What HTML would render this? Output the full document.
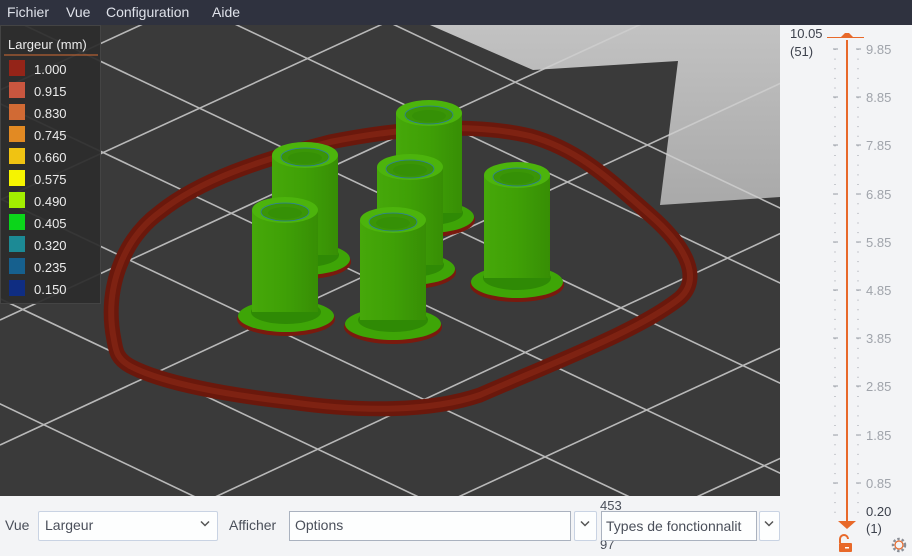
<!DOCTYPE html>
<html><head><meta charset="utf-8"><style>
*{margin:0;padding:0;box-sizing:border-box}
html,body{width:912px;height:556px;overflow:hidden}
body{background:#f3f4f6;font-family:"Liberation Sans","DejaVu Sans",sans-serif;position:relative}
.menu{position:absolute;left:0;top:0;width:912px;height:25px;background:#2f323f;color:#dfe2ea;font-size:14px}
.menu span{position:absolute;top:4px}
.t{position:absolute;font-size:14px;color:#4a4f5a;line-height:16px}
.box{position:absolute;background:#fdfefe;border:1px solid #c9d3e3;border-radius:2px}
</style></head><body>
<div class="menu"><span style="left:7px">Fichier</span><span style="left:66px">Vue</span><span style="left:106px">Configuration</span><span style="left:212px">Aide</span></div>

<svg style="position:absolute;left:0;top:25px" width="780" height="471" viewBox="0 25 780 471">
<defs>
<linearGradient id="gp" x1="0" y1="0" x2="0" y2="1"><stop offset="0" stop-color="#c2c2c2"/><stop offset="1" stop-color="#a9a9a9"/></linearGradient>
<linearGradient id="cyl" x1="0" y1="0" x2="1" y2="0"><stop offset="0" stop-color="#46a80a"/><stop offset="0.5" stop-color="#3fa006"/><stop offset="1" stop-color="#378e05"/></linearGradient>
</defs>
<rect x="0" y="25" width="780" height="471" fill="#3a3a3a"/>
<polygon points="430,25 780,25 780,197 660,205 678,61 533,70" fill="url(#gp)"/>
<g stroke="#cfcfcf" stroke-width="1.6" fill="none" opacity="0.85">
<line x1="-50" y1="-10" x2="900" y2="440"/>
<line x1="-50" y1="80" x2="900" y2="530"/>
<line x1="-50" y1="175" x2="900" y2="625"/>
<line x1="-50" y1="275" x2="900" y2="725"/>
<line x1="-50" y1="380" x2="600" y2="690"/>
<line x1="100" y1="-40" x2="900" y2="340"/>
<line x1="300" y1="-20" x2="900" y2="265"/>
<line x1="0" y1="90" x2="260" y2="-30"/>
<line x1="0" y1="200" x2="500" y2="-30"/>
<line x1="0" y1="320" x2="780" y2="-40"/>
<line x1="0" y1="445" x2="820" y2="65"/>
<line x1="80" y1="560" x2="820" y2="215"/>
<line x1="300" y1="570" x2="820" y2="330"/>
<line x1="560" y1="560" x2="820" y2="440"/>
</g>
<g fill="none">
<path id="lp" d="M114,340 C104,290 122,240 160,212 C200,180 260,160 330,142 C400,128 470,122 530,136 C580,150 610,180 650,215 C690,250 700,280 680,298 C640,330 560,360 480,395 C430,412 360,412 290,402 C220,394 160,382 130,366 C116,358 116,350 114,340 Z" stroke="#6a180c" stroke-width="15"/>
<path d="M114,340 C104,290 122,240 160,212 C200,180 260,160 330,142 C400,128 470,122 530,136 C580,150 610,180 650,215 C690,250 700,280 680,298 C640,330 560,360 480,395 C430,412 360,412 290,402 C220,394 160,382 130,366 C116,358 116,350 114,340 Z" stroke="#7e2212" stroke-width="6"/>
</g>
<g>
<ellipse cx="429" cy="220" rx="46" ry="17" fill="#7a1a0e"/><ellipse cx="429" cy="217" rx="45" ry="16" fill="#3ea507"/><ellipse cx="429" cy="213" rx="34" ry="12" fill="#2f8a05"/>
<rect x="396" y="113" width="66" height="100" fill="url(#cyl)"/><ellipse cx="429" cy="113" rx="33" ry="13" fill="#4cb40c"/><ellipse cx="429" cy="115" rx="24" ry="9" fill="#3a9607" stroke="#2d7fa0" stroke-width="0.7"/><ellipse cx="429" cy="116" rx="17" ry="6" fill="#359006"/>
<ellipse cx="305" cy="262" rx="46" ry="17" fill="#7a1a0e"/><ellipse cx="305" cy="259" rx="45" ry="16" fill="#3ea507"/><ellipse cx="305" cy="255" rx="34" ry="12" fill="#2f8a05"/>
<rect x="272" y="155" width="66" height="100" fill="url(#cyl)"/><ellipse cx="305" cy="155" rx="33" ry="13" fill="#4cb40c"/><ellipse cx="305" cy="157" rx="24" ry="9" fill="#3a9607" stroke="#2d7fa0" stroke-width="0.7"/><ellipse cx="305" cy="158" rx="17" ry="6" fill="#359006"/>
<ellipse cx="410" cy="272" rx="46" ry="17" fill="#7a1a0e"/><ellipse cx="410" cy="269" rx="45" ry="16" fill="#3ea507"/><ellipse cx="410" cy="265" rx="34" ry="12" fill="#2f8a05"/>
<rect x="377" y="167" width="66" height="98" fill="url(#cyl)"/><ellipse cx="410" cy="167" rx="33" ry="13" fill="#4cb40c"/><ellipse cx="410" cy="169" rx="24" ry="9" fill="#3a9607" stroke="#2d7fa0" stroke-width="0.7"/><ellipse cx="410" cy="170" rx="17" ry="6" fill="#359006"/>
<ellipse cx="517" cy="285" rx="47" ry="17" fill="#7a1a0e"/><ellipse cx="517" cy="282" rx="46" ry="16" fill="#3ea507"/><ellipse cx="517" cy="278" rx="34" ry="12" fill="#2f8a05"/>
<rect x="484" y="175" width="66" height="103" fill="url(#cyl)"/><ellipse cx="517" cy="175" rx="33" ry="13" fill="#4cb40c"/><ellipse cx="517" cy="177" rx="24" ry="9" fill="#3a9607" stroke="#2d7fa0" stroke-width="0.7"/><ellipse cx="517" cy="178" rx="17" ry="6" fill="#359006"/>
<ellipse cx="286" cy="319" rx="49" ry="17" fill="#7a1a0e"/><ellipse cx="286" cy="316" rx="48" ry="16" fill="#3ea507"/><ellipse cx="286" cy="312" rx="35" ry="12" fill="#2f8a05"/>
<rect x="252" y="210" width="66" height="102" fill="url(#cyl)"/><ellipse cx="285" cy="210" rx="33" ry="13" fill="#4cb40c"/><ellipse cx="285" cy="212" rx="24" ry="9" fill="#3a9607" stroke="#2d7fa0" stroke-width="0.7"/><ellipse cx="285" cy="213" rx="17" ry="6" fill="#359006"/>
<ellipse cx="393" cy="327" rx="49" ry="17" fill="#7a1a0e"/><ellipse cx="393" cy="324" rx="48" ry="16" fill="#3ea507"/><ellipse cx="393" cy="320" rx="35" ry="12" fill="#2f8a05"/>
<rect x="360" y="220" width="66" height="100" fill="url(#cyl)"/><ellipse cx="393" cy="220" rx="33" ry="13" fill="#4cb40c"/><ellipse cx="393" cy="222" rx="24" ry="9" fill="#3a9607" stroke="#2d7fa0" stroke-width="0.7"/><ellipse cx="393" cy="223" rx="17" ry="6" fill="#359006"/>
</g>
<rect x="0" y="25" width="101" height="279" fill="#2c2c2c" opacity="0.93"/>
<rect x="0.5" y="25.5" width="100" height="278" fill="none" stroke="#444"/>
<line x1="4" y1="55" x2="98" y2="55" stroke="#d46a32" stroke-width="1"/>
<g font-family="Liberation Sans, DejaVu Sans, sans-serif" font-size="13" fill="#ececec">
<text x="8" y="49">Largeur (mm)</text>
<rect x="9" y="60" width="16" height="16" fill="#942418"/><text x="34" y="74">1.000</text>
<rect x="9" y="82" width="16" height="16" fill="#c9563f"/><text x="34" y="96">0.915</text>
<rect x="9" y="104" width="16" height="16" fill="#d16a34"/><text x="34" y="118">0.830</text>
<rect x="9" y="126" width="16" height="16" fill="#e28a23"/><text x="34" y="140">0.745</text>
<rect x="9" y="148" width="16" height="16" fill="#f0c312"/><text x="34" y="162">0.660</text>
<rect x="9" y="170" width="16" height="16" fill="#f6f400"/><text x="34" y="184">0.575</text>
<rect x="9" y="192" width="16" height="16" fill="#a2ef00"/><text x="34" y="206">0.490</text>
<rect x="9" y="214" width="16" height="16" fill="#0bd51a"/><text x="34" y="228">0.405</text>
<rect x="9" y="236" width="16" height="16" fill="#1c8a95"/><text x="34" y="250">0.320</text>
<rect x="9" y="258" width="16" height="16" fill="#16608e"/><text x="34" y="272">0.235</text>
<rect x="9" y="280" width="16" height="16" fill="#0f2d82"/><text x="34" y="294">0.150</text>
</g>
</svg>

<svg style="position:absolute;left:780px;top:25px" width="132" height="531" viewBox="780 25 132 531">
<g stroke="#9a9ea6" stroke-width="1">
<line x1="835" y1="49" x2="835" y2="520" stroke-dasharray="1 8.64"/>
<line x1="858" y1="49" x2="858" y2="520" stroke-dasharray="1 8.64"/>
<path d="M833 49h5M856 49h5M833 97h5M856 97h5M833 145h5M856 145h5M833 194h5M856 194h5M833 242h5M856 242h5M833 290h5M856 290h5M833 338h5M856 338h5M833 386h5M856 386h5M833 435h5M856 435h5M833 483h5M856 483h5"/>
</g>
<line x1="827" y1="37.5" x2="864" y2="37.5" stroke="#e8692a" stroke-width="1"/>
<line x1="847" y1="40" x2="847" y2="524" stroke="#e8692a" stroke-width="2"/>
<path d="M840 38 L845 33 H849 L854 38 Z" fill="#e8692a"/>
<path d="M838 521 H856 L847 529 Z" fill="#e8692a"/>
<g font-family="Liberation Sans, DejaVu Sans, sans-serif" font-size="13">
<g fill="#a0a4ab"><text x="866" y="54">9.85</text><text x="866" y="102">8.85</text><text x="866" y="150">7.85</text><text x="866" y="199">6.85</text><text x="866" y="247">5.85</text><text x="866" y="295">4.85</text><text x="866" y="343">3.85</text><text x="866" y="391">2.85</text><text x="866" y="440">1.85</text><text x="866" y="488">0.85</text></g>
<g fill="#3c414c"><text x="790" y="38">10.05</text><text x="790" y="56">(51)</text><text x="866" y="516">0.20</text><text x="866" y="533">(1)</text></g>
</g>
<path d="M840 543 v-4 a4 4 0 0 1 8 0" fill="none" stroke="#e8692a" stroke-width="2"/>
<rect x="839" y="543" width="13" height="9" rx="1" fill="#e8692a"/>
<rect x="845" y="547" width="4" height="1.5" fill="#fff"/>
<circle cx="899" cy="545" r="6" fill="none" stroke="#8a8e96" stroke-width="2.5" stroke-dasharray="2.4 2"/>
<circle cx="899" cy="545" r="4" fill="none" stroke="#e8692a" stroke-width="1.2"/>
</svg>

<div class="t" style="left:5px;top:517px">Vue</div>
<div class="box" style="left:38px;top:511px;width:180px;height:30px"></div>
<div class="t" style="left:45px;top:517px">Largeur</div>
<svg style="position:absolute;left:200px;top:520px" width="10" height="8"><path d="M1 1.5 L5 5.5 L9 1.5" fill="none" stroke="#555" stroke-width="1.5"/></svg>
<div class="t" style="left:229px;top:517px">Afficher</div>
<div class="box" style="left:289px;top:511px;width:282px;height:30px;border-color:#aab2bf;border-radius:0"></div>
<div class="t" style="left:295px;top:517px">Options</div>
<div class="box" style="left:574px;top:511px;width:23px;height:30px"></div>
<svg style="position:absolute;left:580px;top:520px" width="10" height="8"><path d="M1 1.5 L5 5.5 L9 1.5" fill="none" stroke="#555" stroke-width="1.5"/></svg>
<div class="t" style="left:600px;top:498px;font-size:13px">453</div>
<div class="t" style="left:600px;top:537px;font-size:13px;height:16px">97</div>
<div class="box" style="left:601px;top:511px;width:156px;height:30px;border-color:#aab2bf;border-radius:0;overflow:hidden"><div class="t" style="left:4px;top:6px;white-space:nowrap">Types de fonctionnalit</div></div>
<div class="box" style="left:759px;top:511px;width:21px;height:30px"></div>
<svg style="position:absolute;left:764px;top:520px" width="10" height="8"><path d="M1 1.5 L5 5.5 L9 1.5" fill="none" stroke="#555" stroke-width="1.5"/></svg>
</body></html>
